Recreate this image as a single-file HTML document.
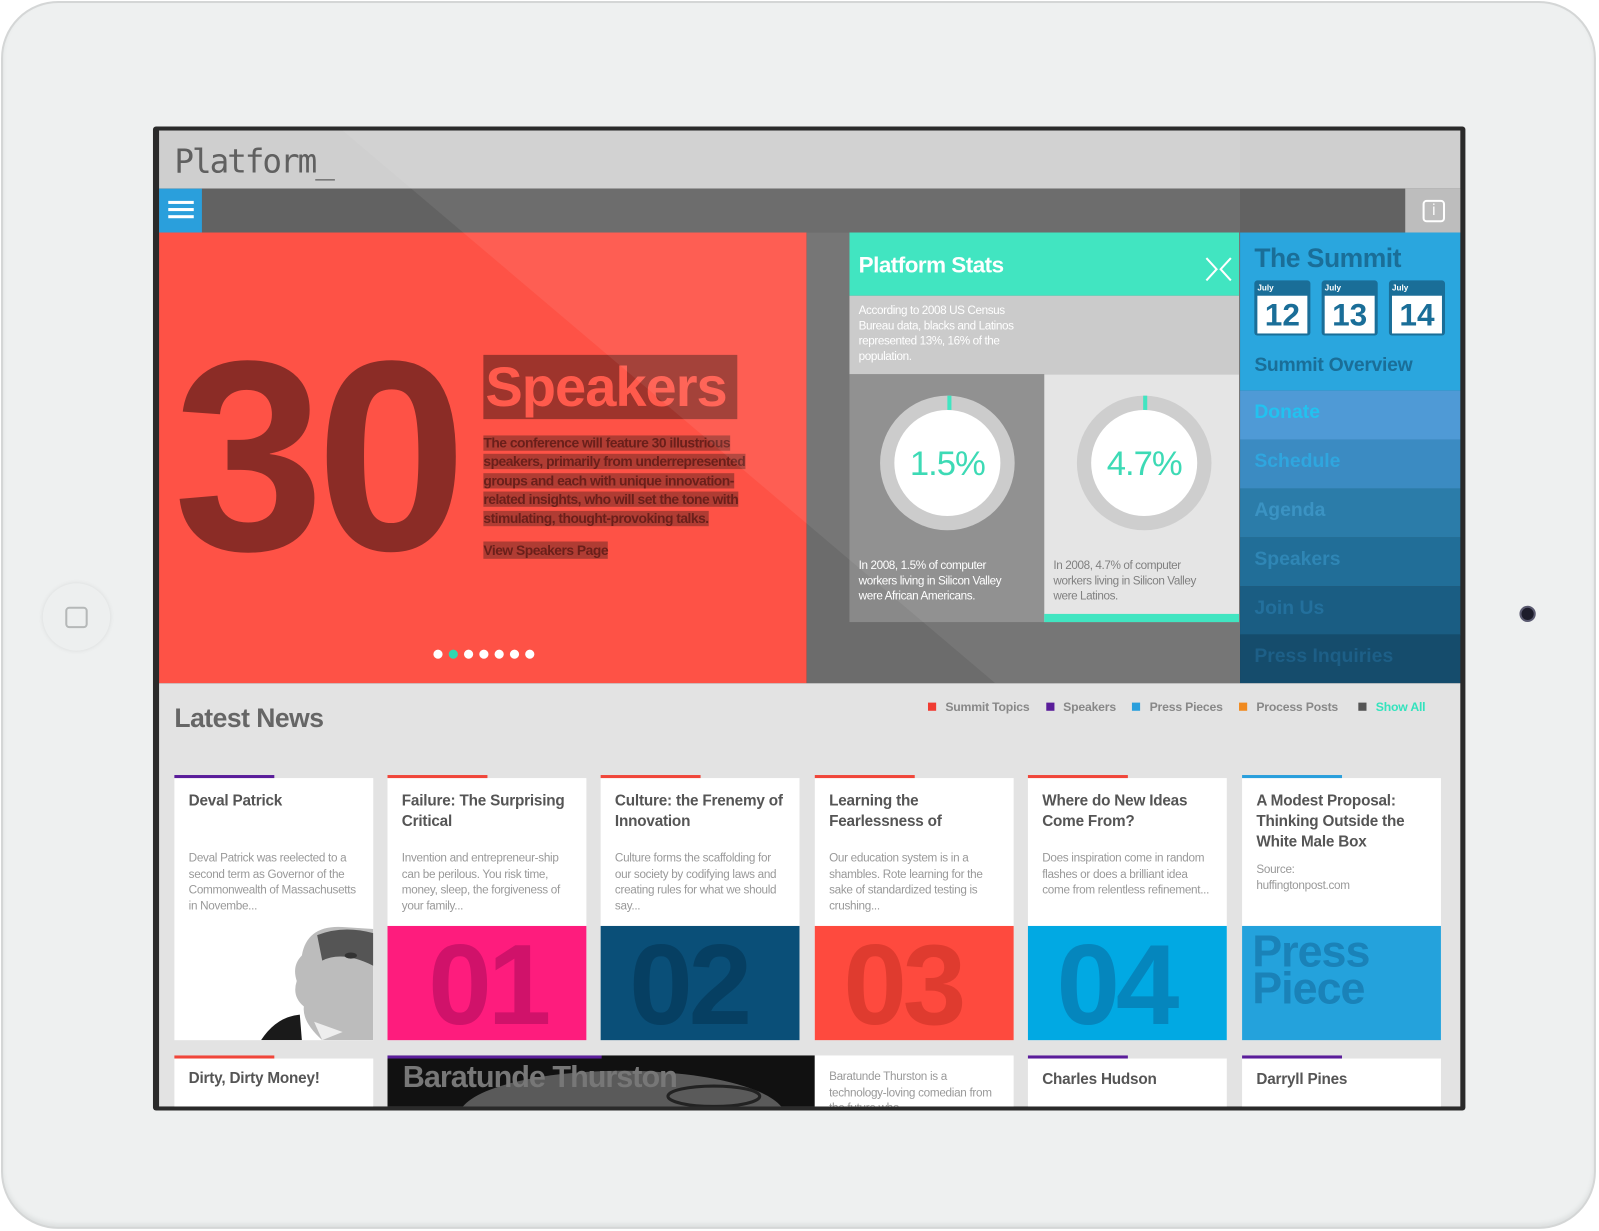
<!DOCTYPE html>
<html><head><meta charset="utf-8">
<style>
*{margin:0;padding:0;box-sizing:border-box}
html,body{width:1599px;height:1231px;overflow:hidden;background:#fff}
body{font-family:"Liberation Sans",Arial,sans-serif}
#w{position:absolute;left:0;top:0;width:1568px;height:1207px;transform:scale(1.01977);transform-origin:0 0}
.a{position:absolute}
.dev{left:1px;top:1px;width:1564px;height:1204px;border-radius:56px;background:#eef0f0;border:2px solid #d4d6d6;box-shadow:inset 0 -3px 4px #dde0e0}
.home{left:42px;top:572px;width:66px;height:66px;border-radius:50%;background:#edefef;box-shadow:0 0 4px #d8dada}
.home i{position:absolute;left:22px;top:23px;width:22px;height:21px;border:2px solid #b5b8b8;border-radius:4px}
.cam{left:1490px;top:594px;width:16px;height:16px;border-radius:50%;background:#1c1c2a;border:2px solid #5a5a70}
.scr{left:150px;top:124px;width:1287px;height:965px;background:#2a2a2a;border-radius:3px}
.b{font-weight:bold}
.card{background:#fff;width:195px}
.card h3{position:absolute;left:14px;top:13px;font-size:15px;line-height:20px;color:#555;font-weight:bold;width:168px;letter-spacing:-.2px}
.card p{position:absolute;left:14px;top:72px;font-size:11.5px;line-height:15.5px;color:#999;width:166px;letter-spacing:-.3px}
.bar{position:absolute;left:0;top:-3px;width:98px;height:3px}
.num{position:absolute;left:0;top:145px;width:195px;height:112px;overflow:hidden;font-weight:bold;font-size:112px;line-height:112px;letter-spacing:-4px}
.num span{position:absolute;left:40px;top:2px}
.nav{left:1216px;width:216px;height:48px;font-size:19px;font-weight:bold;padding:11px 0 0 14px}
.leg{font-size:12px;color:#888;font-weight:bold;letter-spacing:-.2px}
.leg i{display:inline-block;width:8px;height:8px;margin:0 9px 0 16px}
</style></head><body><div id="w">
<div class="a dev"></div>
<div class="a home"><i></i></div>
<div class="a cam"></div>
<div class="a scr"></div>
<div class="a" style="left:156px;top:128px;width:1276px;height:57px;background:#cfcfcf"></div>
<div class="a" style="left:171px;top:139px;font-size:32px;color:#606060;letter-spacing:-2px;font-family:'DejaVu Sans Mono','Liberation Mono',monospace">Platform_</div>
<div class="a" style="left:156px;top:185px;width:1276px;height:43px;background:#626262"></div>
<div class="a" style="left:156px;top:185px;width:42px;height:43px;background:#2a9fdc"></div>
<div class="a" style="left:165px;top:197px;width:25px;height:3px;background:#fff;box-shadow:0 7px 0 #fff,0 14px 0 #fff"></div>
<div class="a" style="left:1378px;top:185px;width:54px;height:43px;background:#bdbdbd"></div>
<div class="a" style="left:1395px;top:196px;width:22px;height:22px;border:2px solid #fff;border-radius:4px;color:#fff;font-size:15px;text-align:center;line-height:18px">i</div>
<div class="a" style="left:156px;top:228px;width:635px;height:442px;background:#fe5246"></div>
<div class="a" style="left:791px;top:228px;width:425px;height:442px;background:#6c6c6c"></div>
<div class="a" style="left:170px;top:318px;font-size:266px;font-weight:bold;color:#8b2c26;letter-spacing:-8px;line-height:260px">30</div>
<div class="a" style="left:474px;top:348px;width:249px;height:63px;background:#9e342c"></div>
<div class="a b" style="left:476px;top:346px;font-size:55px;color:#ff5a4c;letter-spacing:-1px;line-height:66px">Speakers</div>
<div class="a b" style="left:474px;top:426px;font-size:13.6px;line-height:18.4px;color:#7a2620;width:285px;letter-spacing:-.5px"><span style="background:#b03c33;color:#6a1f1a">The conference will feature 30 illustrious speakers, primarily from underrepresented groups and each with unique innovation-related insights, who will set the tone with stimulating, thought-provoking talks.</span></div>
<div class="a b" style="left:474px;top:531px;font-size:13.6px;line-height:17px;letter-spacing:-.5px;background:#b03c33;color:#6a1f1a">View Speakers Page</div>
<div class="a" style="left:425px;top:637px;width:9px;height:9px;border-radius:50%;background:#fff;box-shadow:15px 0 0 #2fd8b0,30px 0 0 #fff,45px 0 0 #fff,60px 0 0 #fff,75px 0 0 #fff,90px 0 0 #fff"></div>
<div class="a" style="left:833px;top:228px;width:382px;height:62px;background:#33e3bd"></div>
<div class="a b" style="left:842px;top:247px;font-size:22px;color:#fff;letter-spacing:-.5px">Platform Stats</div>
<svg class="a" style="left:1180px;top:250px" width="30" height="28"><path d="M3 3L13 14L3 25M27 3L17 14L27 25" stroke="#fff" stroke-width="2" fill="none"/></svg>
<div class="a" style="left:833px;top:290px;width:382px;height:77px;background:#c8c8c8"></div>
<div class="a" style="left:842px;top:298px;font-size:11.5px;line-height:15px;color:#fff;width:178px;letter-spacing:-.4px">According to 2008 US Census Bureau data, blacks and Latinos represented 13%, 16% of the population.</div>
<div class="a" style="left:833px;top:367px;width:191px;height:243px;background:#898989"></div>
<div class="a" style="left:1024px;top:367px;width:191px;height:243px;background:#e4e4e4"></div>
<div class="a" style="left:1024px;top:602px;width:191px;height:8px;background:#33e3bd"></div>
<div class="a" style="left:863px;top:388px;width:132px;height:132px;border-radius:50%;background:#c9c9c9"></div>
<div class="a" style="left:877px;top:402px;width:104px;height:104px;border-radius:50%;background:#fff"></div>
<div class="a" style="left:929px;top:388px;width:4px;height:14px;background:#33e3bd"></div>
<div class="a" style="left:863px;top:436px;width:132px;text-align:center;font-size:34px;color:#2fd8b0;letter-spacing:-1px">1.5%</div>
<div class="a" style="left:1056px;top:388px;width:132px;height:132px;border-radius:50%;background:#cbcbcb"></div>
<div class="a" style="left:1070px;top:402px;width:104px;height:104px;border-radius:50%;background:#fff"></div>
<div class="a" style="left:1121px;top:388px;width:4px;height:14px;background:#33e3bd"></div>
<div class="a" style="left:1056px;top:436px;width:132px;text-align:center;font-size:34px;color:#2fd8b0;letter-spacing:-1px">4.7%</div>
<div class="a" style="left:842px;top:548px;font-size:11.5px;line-height:15px;color:#fff;width:165px;letter-spacing:-.4px">In 2008, 1.5% of computer workers living in Silicon Valley were African Americans.</div>
<div class="a" style="left:1033px;top:548px;font-size:11.5px;line-height:15px;color:#777;width:165px;letter-spacing:-.4px">In 2008, 4.7% of computer workers living in Silicon Valley were Latinos.</div>
<div class="a" style="left:1216px;top:228px;width:216px;height:155px;background:#2aa6de"></div>
<div class="a b" style="left:1230px;top:238px;font-size:26px;color:#1a6e98;letter-spacing:-.5px">The Summit</div>
<div class="a" style="left:1230px;top:275px;width:55px;height:54px;background:#1a6e98;border-radius:3px"></div>
<div class="a" style="left:1296px;top:275px;width:55px;height:54px;background:#1a6e98;border-radius:3px"></div>
<div class="a" style="left:1362px;top:275px;width:55px;height:54px;background:#1a6e98;border-radius:3px"></div>
<div class="a b" style="left:1233px;top:278px;font-size:8px;color:#fff">July</div>
<div class="a b" style="left:1299px;top:278px;font-size:8px;color:#fff">July</div>
<div class="a b" style="left:1365px;top:278px;font-size:8px;color:#fff">July</div>
<div class="a b" style="left:1233px;top:290px;width:49px;height:37px;background:#fff;color:#1a6e98;font-size:31px;text-align:center;line-height:37px">12</div>
<div class="a b" style="left:1299px;top:290px;width:49px;height:37px;background:#fff;color:#1a6e98;font-size:31px;text-align:center;line-height:37px">13</div>
<div class="a b" style="left:1365px;top:290px;width:49px;height:37px;background:#fff;color:#1a6e98;font-size:31px;text-align:center;line-height:37px">14</div>
<div class="a b" style="left:1230px;top:348px;font-size:19px;color:#1a6e98;letter-spacing:-.3px">Summit Overview</div>
<div class="a nav" style="top:383px;background:#4f9ad6;color:#22c2f0">Donate</div>
<div class="a nav" style="top:431px;background:#3b8bc2;color:#2fa6df">Schedule</div>
<div class="a nav" style="top:479px;background:#2b7ca9;color:#3b93c3">Agenda</div>
<div class="a nav" style="top:527px;background:#216e98;color:#2f86b5">Speakers</div>
<div class="a nav" style="top:575px;background:#1a5d83;color:#23709d">Join Us</div>
<div class="a nav" style="top:622px;background:#154c6c;color:#1d5f87">Press Inquiries</div>
<svg class="a" style="left:156px;top:128px" width="1060" height="542"><polygon points="180,0 1060,0 1060,542 820,542" fill="#fff" opacity="0.07"/></svg>
<div class="a" style="left:156px;top:670px;width:1276px;height:415px;background:#e3e3e3"></div>
<div class="a b" style="left:171px;top:689px;font-size:26px;color:#666;letter-spacing:-.5px">Latest News</div>
<div class="a leg" style="left:894px;top:686px"><i style="background:#f03c32"></i>Summit Topics<i style="background:#5a1d9a"></i>Speakers<i style="background:#2a9fdc"></i>Press Pieces<i style="background:#f08a20"></i>Process Posts<i style="background:#555;margin-left:20px"></i><span style="color:#33e3bd">Show All</span></div>

<div class="a card" style="left:171px;top:763px;height:257px"><div class="bar" style="background:#5a1d9a"></div><h3>Deval Patrick</h3><p>Deval Patrick was reelected to a second term as Governor of the Commonwealth of Massachusetts in Novembe...</p>
<svg class="a" style="left:85px;top:144px" width="110" height="113"><path d="M40 30Q45 0 80 2L110 4V113H60Q40 95 42 80Q30 70 35 55Q30 40 40 30Z" fill="#bcbcbc"/><path d="M55 10Q80 0 110 8V40Q80 25 60 35Z" fill="#555"/><path d="M0 113Q15 90 38 88L40 113Z" fill="#1a1a1a"/><path d="M60 113L52 95L80 105Z" fill="#eee"/><ellipse cx="88" cy="30" rx="6" ry="3" fill="#333"/></svg></div>
<div class="a card" style="left:380px;top:763px;height:257px"><div class="bar" style="background:#f0463a"></div><h3>Failure: The Surprising Critical</h3><p>Invention and entrepreneur-ship can be perilous. You risk time, money, sleep, the forgiveness of your family...</p><div class="num" style="background:#fe1c7d;color:#d0126a"><span>01</span></div></div>
<div class="a card" style="left:589px;top:763px;height:257px"><div class="bar" style="background:#f0463a"></div><h3>Culture: the Frenemy of Innovation</h3><p>Culture forms the scaffolding for our society by codifying laws and creating rules for what we should say...</p><div class="num" style="background:#0a4f78;color:#063f62"><span style="left:28px">02</span></div></div>
<div class="a card" style="left:799px;top:763px;height:257px"><div class="bar" style="background:#f0463a"></div><h3>Learning the Fearlessness of</h3><p>Our education system is in a shambles. Rote learning for the sake of standardized testing is crushing...</p><div class="num" style="background:#fe4a3e;color:#df3b2f"><span style="left:28px">03</span></div></div>
<div class="a card" style="left:1008px;top:763px;height:257px"><div class="bar" style="background:#f0463a"></div><h3>Where do New Ideas Come From?</h3><p>Does inspiration come in random flashes or does a brilliant idea come from relentless refinement...</p><div class="num" style="background:#01a9e3;color:#0586bd"><span style="left:28px">04</span></div></div>
<div class="a card" style="left:1218px;top:763px;height:257px"><div class="bar" style="background:#2a9fdc"></div><h3>A Modest Proposal: Thinking Outside the White Male Box</h3><p style="top:83px">Source:<br>huffingtonpost.com</p><div class="num" style="background:#24a2dc;color:#1a82b8;font-size:44px;line-height:36px;letter-spacing:-1px"><span style="left:10px;top:8px">Press<br>Piece</span></div></div>

<div class="a card" style="left:171px;top:1038px;height:47px"><div class="bar" style="background:#f0463a"></div><h3 style="top:10px">Dirty, Dirty Money!</h3></div>
<div class="a" style="left:380px;top:1035px;width:419px;height:50px;background:#111;overflow:hidden"><div class="a" style="left:0;top:0;width:210px;height:3px;background:#5a1d9a"></div>
<svg class="a" style="left:0;top:0" width="419" height="50"><ellipse cx="230" cy="60" rx="160" ry="45" fill="#5a5a5a"/><ellipse cx="320" cy="40" rx="45" ry="10" fill="none" stroke="#222" stroke-width="3"/></svg>
<div class="a b" style="left:15px;top:5px;font-size:30px;color:#777;letter-spacing:-1px">Baratunde Thurston</div></div>
<div class="a" style="left:799px;top:1035px;width:195px;height:50px;background:#fff;overflow:hidden"><div class="a" style="left:14px;top:14px;font-size:11.5px;line-height:15.5px;color:#999;width:166px;letter-spacing:-.3px">Baratunde Thurston is a technology-loving comedian from the future who</div></div>
<div class="a card" style="left:1008px;top:1038px;height:47px"><div class="bar" style="background:#5a1d9a"></div><h3 style="top:11px">Charles Hudson</h3></div>
<div class="a card" style="left:1218px;top:1038px;height:47px"><div class="bar" style="background:#5a1d9a"></div><h3 style="top:11px">Darryll Pines</h3></div>
</div></body></html>
